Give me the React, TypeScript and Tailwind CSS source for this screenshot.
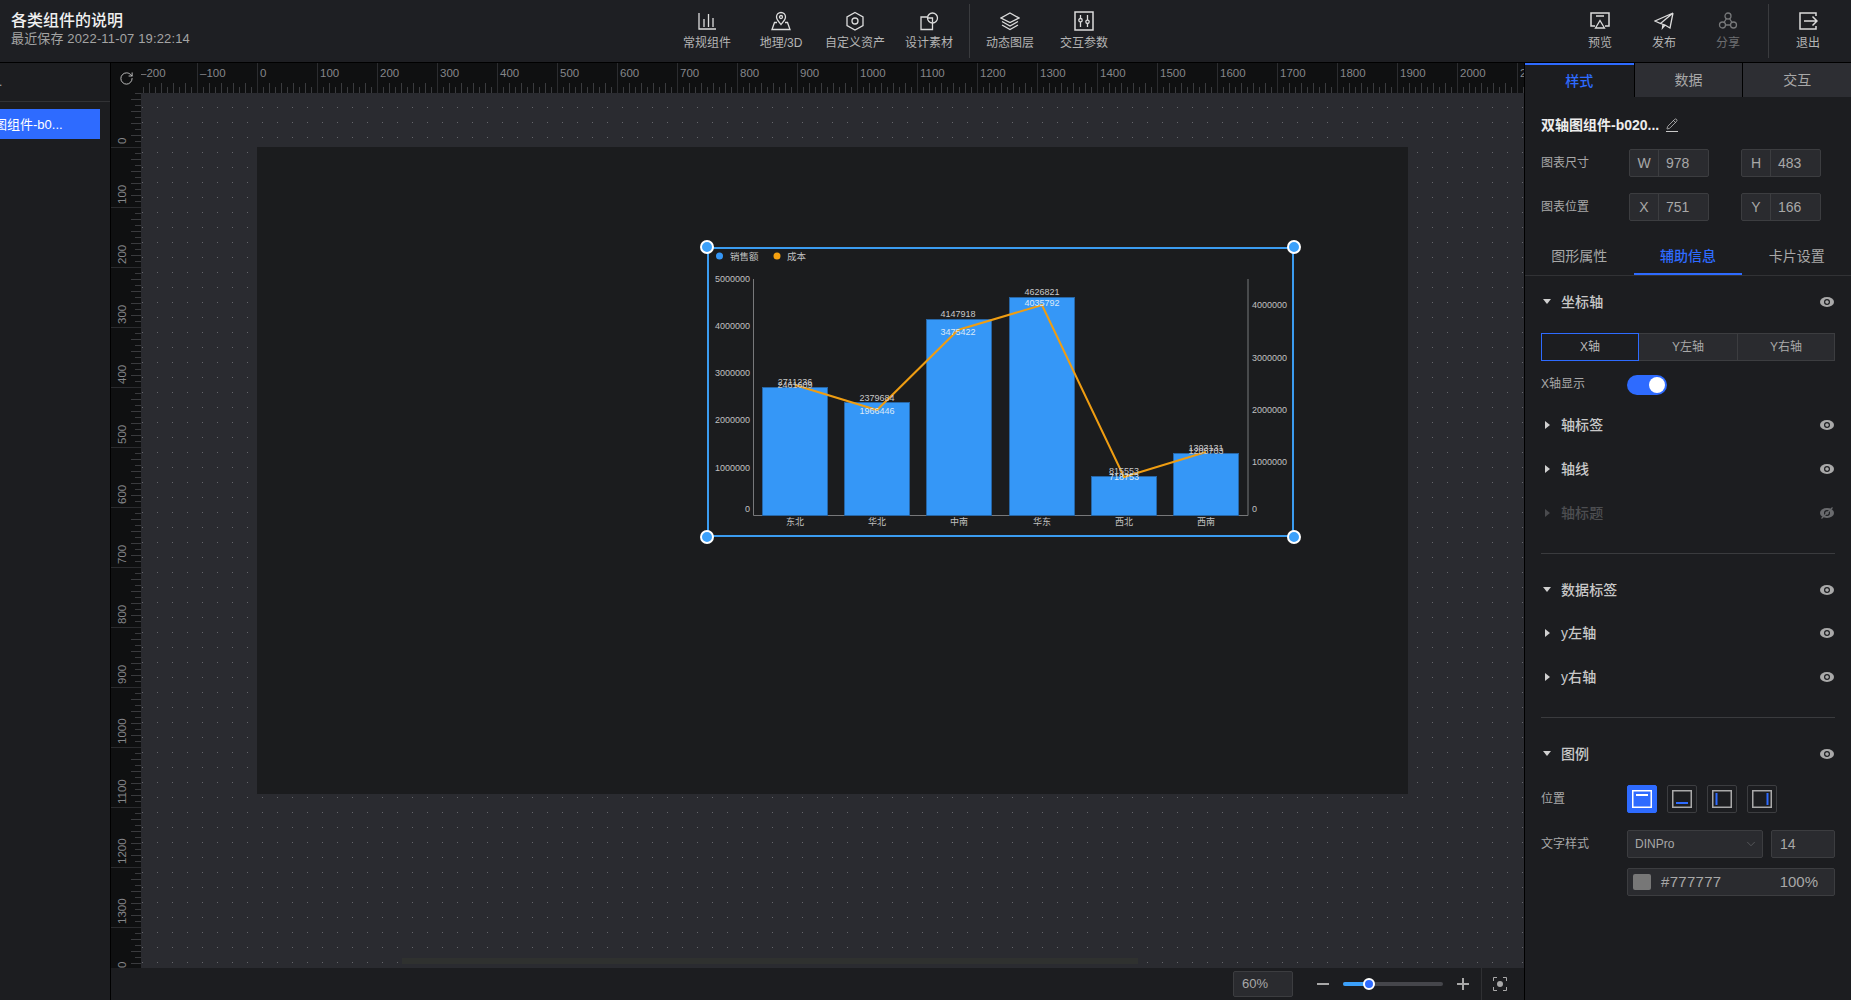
import { RotateCw, ChevronDown, Pencil } from "lucide-react"

const bars = [
  { x: 762, top: 387, name: "东北" },
  { x: 844, top: 402, name: "华北" },
  { x: 926, top: 319, name: "中南" },
  { x: 1009, top: 297, name: "华东" },
  { x: 1091, top: 476, name: "西北" },
  { x: 1173, top: 453, name: "西南" },
]

const linePoints = "795,385 877,410 958,330 1042,305 1124,477 1206,452"

// value labels, [text, x, y, colour]
const valueLabels: [string, number, number, string][] = [
  ["2711236", 795, 385, "#c8c8c8"],
  ["2461609", 795, 388, "#c8c8c8"],
  ["2379684", 877, 401, "#c8c8c8"],
  ["1966446", 877, 414, "#dbe9f8"],
  ["4147918", 958, 317, "#c8c8c8"],
  ["3475422", 958, 335, "#dbe9f8"],
  ["4626821", 1042, 295, "#c8c8c8"],
  ["4035792", 1042, 306, "#dbe9f8"],
  ["815553", 1124, 474, "#c8c8c8"],
  ["718753", 1124, 480, "#dbe9f8"],
  ["1303131", 1206, 451, "#c8c8c8"],
  ["1205703", 1206, 454, "#c8c8c8"],
]

const leftTicks: [string, number][] = [
  ["5000000", 282],
  ["4000000", 329],
  ["3000000", 376],
  ["2000000", 423],
  ["1000000", 471],
  ["0", 512],
]

const rightTicks: [string, number][] = [
  ["4000000", 308],
  ["3000000", 361],
  ["2000000", 413],
  ["1000000", 465],
  ["0", 512],
]

function Chart() {
  return (
    <svg className="absolute inset-0" width={587} height={290} viewBox="707 247 587 290">
      <circle cx={719.5} cy={256} r={3.5} fill="#3597f7" />
      <text x={730} y={260} fontSize={9.5} fill="#c0c0c0">销售额</text>
      <circle cx={777} cy={256} r={3.5} fill="#f5a00f" />
      <text x={787} y={260} fontSize={9.5} fill="#c0c0c0">成本</text>

      <path d="M753.5 279V515.5H1248V279" fill="none" stroke="#77787a" strokeWidth={1} />

      {bars.map((b) => (
        <rect key={b.name} x={b.x + 0.5} y={b.top + 0.5} width={65} height={515 - b.top} fill="#3597f7" stroke="#2766a6" strokeWidth={1} />
      ))}
      <polyline points={linePoints} fill="none" stroke="#ef9d12" strokeWidth={2} />

      {valueLabels.map(([t, x, y, c]) => (
        <text key={t} x={x} y={y} fontSize={9} fill={c} textAnchor="middle">{t}</text>
      ))}
      {leftTicks.map(([t, y]) => (
        <text key={t} x={750} y={y} fontSize={9} fill="#c0c0c0" textAnchor="end">{t}</text>
      ))}
      {rightTicks.map(([t, y]) => (
        <text key={t} x={1252} y={y} fontSize={9} fill="#c0c0c0">{t}</text>
      ))}
      {bars.map((b) => (
        <text key={b.name} x={b.x + 33} y={525} fontSize={9} fill="#c0c0c0" textAnchor="middle">{b.name}</text>
      ))}
    </svg>
  )
}

function TopRuler() {
  const majors = Array.from({ length: 24 }, (_, i) => i)
  return (
    <svg width={1413} height={30} className="block shrink-0 bg-[#0f1011]">
      {majors.map((i) => {
        const x = 26 + i * 60
        return (
          <g key={i}>
            <line x1={x + 0.5} y1={0} x2={x + 0.5} y2={30} stroke="#2b2c2f" />
            {[1, 2, 3, 4, 5, 6, 7, 8, 9].map((k) => (
              <line key={k} x1={x + k * 6 + 0.5} y1={k % 2 === 0 ? 20 : 24} x2={x + k * 6 + 0.5} y2={30} stroke="#3a3b3e" />
            ))}
            <text x={x + 3} y={14} fontSize={11.5} fill="#85868a">{i === 0 ? "–200" : i === 1 ? "–100" : (i - 2) * 100}</text>
          </g>
        )
      })}
      <rect width={30} height={30} fill="#0f1011" />
    </svg>
  )
}

function LeftRuler() {
  const majors = Array.from({ length: 15 }, (_, i) => i)
  return (
    <svg width={30} height={875} className="block shrink-0 bg-[#0f1011]">
      {majors.map((i) => {
        const y = 54 + i * 60 - 60
        return (
          <g key={i}>
            <line x1={0} y1={y + 0.5} x2={30} y2={y + 0.5} stroke="#2b2c2f" />
            {[1, 2, 3, 4, 5, 6, 7, 8, 9].map((k) => (
              <line key={k} x1={k % 2 === 0 ? 20 : 24} y1={y + k * 6 + 0.5} x2={30} y2={y + k * 6 + 0.5} stroke="#3a3b3e" />
            ))}
            {i > 0 && i < 15 && (
              <text x={15} y={y - 3} fontSize={11.5} fill="#85868a" transform={`rotate(-90 15 ${y - 3})`}>{(i - 1) * 100}</text>
            )}
          </g>
        )
      })}
      <text x={15} y={875} fontSize={11.5} fill="#85868a" transform="rotate(-90 15 875)">0</text>
    </svg>
  )
}

function Handle({ className }: { className: string }) {
  return <div className={`absolute h-[14px] w-[14px] rounded-full border-2 border-white bg-[#3ba0fa] ${className}`} />
}

function NavItem({ label, children, dim }: { label: string; children: React.ReactNode; dim?: boolean }) {
  return (
    <div className={`flex h-full flex-col items-center pt-[11px] ${dim ? "text-[#6e6f72]" : "text-[#b4b4b4]"}`}>
      <svg width={20} height={20} viewBox="0 0 20 20" fill="none" stroke={dim ? "#77787a" : "#dcdcdc"} strokeWidth={1.3}>
        {children}
      </svg>
      <span className="mt-[4px] whitespace-nowrap text-[12px] leading-[16px]">{label}</span>
    </div>
  )
}

function Eye({ off }: { off?: boolean }) {
  return (
    <svg width={14} height={12} viewBox="0 0 14 12" className="shrink-0">
      <ellipse cx={7} cy={6} rx={7} ry={5} fill={off ? "#6a6b6e" : "#a9a9a9"} />
      <circle cx={7} cy={6} r={2.4} fill="none" stroke="#1c1d20" strokeWidth={1.2} />
      {off && <path d="M1.5 11.5 12.5 .5" stroke="#6a6b6e" strokeWidth={1.2} />}
    </svg>
  )
}

function Section({ label, open, off, className }: { label: string; open?: boolean; off?: boolean; className: string }) {
  return (
    <div className={`flex h-[20px] items-center ${className}`}>
      <svg width={10} height={10} viewBox="0 0 10 10" className="ml-px shrink-0">
        {open ? (
          <path d="M1 2h8L5 7z" fill="#d0d0d0" />
        ) : (
          <path d="M3 1v8l5-4z" fill={off ? "#4a4b4e" : "#d0d0d0"} />
        )}
      </svg>
      <span className={`ml-[9px] text-[14px] font-medium tracking-[0.1px] ${off ? "text-[#4d4e51]" : "text-[#c8c8c8]"}`}>{label}</span>
      <div className="ml-auto flex pr-px">
        <Eye off={off} />
      </div>
    </div>
  )
}

function Field({ prefix, value }: { prefix: string; value: string }) {
  return (
    <div className="flex h-[28px] w-[80px] rounded-[2px] border border-[#3c3d40] bg-[#2a2b2f] text-[14px] text-[#a8a8a8]">
      <div className="flex w-[29px] items-center justify-center border-r border-[#3c3d40]">{prefix}</div>
      <div className="flex flex-1 items-center pl-[7px]">{value}</div>
    </div>
  )
}

function LegendPos({ active, line }: { active?: boolean; line: "top" | "bottom" | "left" | "right" }) {
  const c = active ? "#ffffff" : "#a9a9a9"
  const l = active ? "#ffffff" : "#2e6bff"
  const d = { top: "M4 5h12", bottom: "M4 13h12", left: "M4.5 3v12", right: "M15.5 3v12" }[line]
  return (
    <div className={`flex h-[28px] w-[30px] items-center justify-center rounded-[2px] border ${active ? "border-[#2e6bff] bg-[#2e6bff]" : "border-[#3c3d40]"}`}>
      <svg width={20} height={18} viewBox="0 0 20 18" fill="none">
        <rect x={0.75} y={0.75} width={18.5} height={16.5} stroke={c} strokeWidth={1.5} />
        <path d={d} stroke={l} strokeWidth={2} />
      </svg>
    </div>
  )
}

export default function App() {
  return (
    <div className="flex h-[1000px] w-[1851px] flex-col overflow-hidden bg-[#1c1d20] font-['Liberation_Sans','Noto_Sans_CJK_SC',sans-serif]">
      {/* top bar */}
      <header className="flex h-[63px] shrink-0 items-stretch border-b border-black bg-[#1e1f23]">
        <div className="w-[670px] shrink-0 pl-[11px] pt-[11px]">
          <div className="text-[16px] font-medium leading-[20px] text-[#f0f0f0]">各类组件的说明</div>
          <div className="text-[13px] leading-[16px] tracking-[0.15px] text-[#a4a4a4]">最近保存 2022-11-07 19:22:14</div>
        </div>
        <div className="grid w-[296px] grid-cols-4">
          <NavItem label="常规组件">
            <path d="M2 2v16h17M7 8v8M11.5 3v13M16 7v9" />
          </NavItem>
          <NavItem label="地理/3D">
            <path d="M10 13.5C7.5 10.5 5.5 8.5 5.5 6a4.5 4.5 0 0 1 9 0c0 2.500-2 4.500-4.500 7.500z" />
            <circle cx={10} cy={6} r={1.5} />
            <path d="M6 11.5H3.500L1 18.500h18L16.500 11.500H14" />
          </NavItem>
          <NavItem label="自定义资产">
            <path d="M10 1.500 18 6v8.500L10 19 2 14.500V6z" />
            <circle cx={10} cy={10} r={3} />
          </NavItem>
          <NavItem label="设计素材">
            <path d="M8 6H2v12.500h11.500V12" />
            <circle cx={13.500} cy={7} r={5} />
            <path d="M9 7h4.500v4.500" />
          </NavItem>
        </div>
        <div className="my-[4px] ml-[3px] w-px bg-[#3a3b3e]" />
        <div className="ml-[3px] grid w-[148px] grid-cols-2">
          <NavItem label="动态图层">
            <path d="M10 2 19 7l-9 4.500L1 7z" />
            <path d="m2 10.500 8 4.500 8-4.500M2 14l8 4.500 8-4.500" />
          </NavItem>
          <NavItem label="交互参数">
            <path d="M1 1h18v18H1z" strokeWidth={1.5} />
            <path d="M6.500 4v3.500M6.500 11v5M13.500 4v5M13.500 12.500V16" />
            <circle cx={6.500} cy={9.200} r={1.700} />
            <circle cx={13.500} cy={10.800} r={1.700} />
          </NavItem>
        </div>
        <div className="ml-auto grid w-[192px] grid-cols-3">
          <NavItem label="预览">
            <path d="M5 15H1V2h18v13h-4" strokeWidth={1.5} />
            <path d="M6 5h8M10 9.500 14.500 17h-9z" />
          </NavItem>
          <NavItem label="发布">
            <path d="M19 2 1 10l5.500 2.500L19 2zM19 2l-3 15-5-3-4.500-1.500M11 14l-2.500 3 .5-4" />
          </NavItem>
          <NavItem label="分享" dim>
            <circle cx={10} cy={5} r={3} />
            <circle cx={4.500} cy={14} r={3} />
            <circle cx={15.500} cy={14} r={3} />
            <path d="M7.500 14h5M8.500 7.500 6 11.500M11.500 7.500l2.500 4" />
          </NavItem>
        </div>
        <div className="my-[4px] ml-[8px] w-px bg-[#3a3b3e]" />
        <div className="ml-[7px] mr-[11px] w-[64px]">
          <NavItem label="退出">
            <path d="M18 5V2H2v16h16v-3" strokeWidth={1.5} />
            <path d="M6 10h13M14.500 5.500 19 10l-4.500 4.500" strokeWidth={1.5} />
          </NavItem>
        </div>
      </header>

      <div className="flex min-h-0 flex-1">
        {/* layer list */}
        <aside className="w-[111px] shrink-0 overflow-hidden border-r border-black bg-[#1c1d20]">
          <div className="flex h-[39px] items-center border-b border-[#313235] text-[12px] text-[#aaaaaa]">
            <span className="-ml-px leading-none">.</span>
          </div>
          <div className="mt-[7px] flex h-[30px] w-[100px] items-center overflow-hidden whitespace-nowrap bg-[#2e6bff] pt-px text-[13px] text-white">
            <span className="-ml-[6px]">图组件-b0...</span>
          </div>
        </aside>

        {/* editor canvas */}
        <main className="flex min-w-0 flex-1 flex-col">
          <div className="relative shrink-0">
            <TopRuler />
            <RotateCw className="absolute left-[8px] top-[8px] h-[15px] w-[15px] text-[#c4c4c4]" strokeWidth={1.5} />
          </div>
          <div className="flex h-[875px] shrink-0">
            <LeftRuler />
            <div className="relative flex-1 overflow-hidden bg-[#2a2b30] bg-[radial-gradient(#66676c_0.8px,transparent_1px)] bg-[size:15px_15px] bg-[position:9px_7px]">
              <div className="absolute left-[116px] top-[54px] h-[647px] w-[1151px] bg-[#1b1c1e]">
                <div className="absolute left-[450px] top-[100px] h-[290px] w-[587px] border-2 border-[#3b9cf0]">
                  <div className="absolute -left-[2px] -top-[2px] h-[290px] w-[587px]">
                    <Chart />
                  </div>
                  <Handle className="-left-[9px] -top-[9px]" />
                  <Handle className="-right-[9px] -top-[9px]" />
                  <Handle className="-bottom-[9px] -left-[9px]" />
                  <Handle className="-bottom-[9px] -right-[9px]" />
                </div>
              </div>
              <div className="absolute bottom-[4px] left-[261px] h-[6px] w-[736px] bg-[#2f312f]" />
            </div>
          </div>
          <div className="flex h-[32px] shrink-0 items-center justify-end bg-[#1c1d20] pr-[16px]">
            <div className="flex h-[26px] w-[60px] items-center rounded-[2px] border border-[#3c3d40] bg-[#2a2b2f] pl-[8px] text-[13px] text-[#a8a8a8]">60%</div>
            <div className="ml-[24px] h-[2px] w-[12px] bg-[#a8a8a8]" />
            <div className="ml-[14px] flex h-[4px] w-[100px] items-center rounded-full bg-[#45464b]">
              <div className="h-[4px] w-[26px] rounded-full bg-[#3ba0fa]" />
              <div className="-ml-[6px] h-[12px] w-[12px] rounded-full border-2 border-white bg-[#2e6bff]" />
            </div>
            <div className="relative ml-[14px] flex h-[12px] w-[12px] items-center justify-center">
              <div className="h-[2px] w-[12px] bg-[#a8a8a8]" />
              <div className="absolute h-[12px] w-[2px] bg-[#a8a8a8]" />
            </div>
            <div className="ml-[12px] h-[32px] w-px bg-[#2f3033]" />
            <svg width={14} height={14} viewBox="0 0 14 14" fill="none" className="ml-[11px] mr-px">
              <path d="M.5 4V.5H4M10 .5h3.500V4M13.500 10v3.500H10M4 13.500H.5V10" stroke="#a8a8a8" />
              <circle cx={7} cy={7} r={3} fill="#a8a8a8" />
            </svg>
          </div>
        </main>

        {/* property panel */}
        <aside className="w-[327px] shrink-0 border-l border-black bg-[#1c1d20] text-[#a8a8a8]">
          <div className="grid h-[34px] grid-cols-3 text-[14px]">
            <div className="flex items-center justify-center border-t-2 border-[#2e6bff] font-medium text-[#2e6bff]">样式</div>
            <div className="flex items-center justify-center border-l border-black bg-[#2d2e33]">数据</div>
            <div className="flex items-center justify-center border-l border-black bg-[#2d2e33]">交互</div>
          </div>

          <div className="px-[16px]">
            <div className="mt-[18px] flex h-[20px] items-center text-[14px] font-bold text-[#ececec]">
              双轴图组件-b020...
              <span className="ml-[7px] border-b border-[#c8c8c8] pb-px">
                <Pencil className="h-[12px] w-[12px] text-[#c8c8c8]" strokeWidth={1.5} />
              </span>
            </div>
            <div className="mt-[14px] flex items-center text-[12px]">
              <div className="w-[88px]">图表尺寸</div>
              <Field prefix="W" value="978" />
              <div className="ml-[32px]"><Field prefix="H" value="483" /></div>
            </div>
            <div className="mt-[16px] flex items-center text-[12px]">
              <div className="w-[88px]">图表位置</div>
              <Field prefix="X" value="751" />
              <div className="ml-[32px]"><Field prefix="Y" value="166" /></div>
            </div>
          </div>

          <div className="mt-[19px] grid h-[36px] grid-cols-3 border-b border-[#313235] text-[14px]">
            <div className="flex items-center justify-center pb-[2px]">图形属性</div>
            <div className="flex items-center justify-center border-b-2 border-[#2e6bff] font-medium text-[#2e6bff]">辅助信息</div>
            <div className="flex items-center justify-center pb-[2px]">卡片设置</div>
          </div>

          <div className="px-[16px]">
            <Section label="坐标轴" open className="mt-[16px]" />
            <div className="mt-[21px] grid h-[28px] grid-cols-3 text-[12px]">
              <div className="flex items-center justify-center border border-[#2e6bff] text-[#b8b8b8]">X轴</div>
              <div className="flex items-center justify-center border-y border-[#3c3d40] bg-[#2a2b2f]">Y左轴</div>
              <div className="flex items-center justify-center border border-[#3c3d40] bg-[#2a2b2f]">Y右轴</div>
            </div>
            <div className="mt-[14px] flex h-[20px] items-center text-[12px]">
              <div className="w-[86px] pb-[2px]">X轴显示</div>
              <div className="flex h-[20px] w-[40px] items-center justify-end rounded-full bg-[#2e6bff] pr-[2px]">
                <div className="h-[16px] w-[16px] rounded-full bg-white" />
              </div>
            </div>
            <Section label="轴标签" className="mt-[20px]" />
            <Section label="轴线" className="mt-[24px]" />
            <Section label="轴标题" off className="mt-[24px]" />
            <div className="mt-[30px] h-px bg-[#3a3b3e]" />
            <Section label="数据标签" open className="mt-[26px]" />
            <Section label="y左轴" className="mt-[23px]" />
            <Section label="y右轴" className="mt-[24px]" />
            <div className="mt-[30px] h-px bg-[#3a3b3e]" />
            <Section label="图例" open className="mt-[26px]" />

            <div className="mt-[21px] flex h-[28px] items-center text-[12px]">
              <div className="w-[86px]">位置</div>
              <div className="flex gap-[10px]">
                <LegendPos active line="top" />
                <LegendPos line="bottom" />
                <LegendPos line="left" />
                <LegendPos line="right" />
              </div>
            </div>
            <div className="mt-[17px] flex h-[28px] items-center text-[12px]">
              <div className="w-[86px]">文字样式</div>
              <div className="flex h-[28px] w-[136px] items-center justify-between rounded-[2px] border border-[#3c3d40] bg-[#2a2b2f] pl-[7px] pr-[4px] text-[12px]">
                DINPro
                <ChevronDown className="h-[14px] w-[14px] text-[#66676a]" strokeWidth={1.2} />
              </div>
              <div className="ml-[8px] flex h-[28px] w-[64px] items-center rounded-[2px] border border-[#3c3d40] bg-[#2a2b2f] pl-[8px] text-[14px]">14</div>
            </div>
            <div className="ml-[86px] mt-[10px] flex h-[28px] items-center rounded-[2px] border border-[#3c3d40] bg-[#2a2b2f] pl-[5px] pr-[16px] text-[15px]">
              <div className="h-[16px] w-[18px] rounded-[2px] bg-[#777777]" />
              <span className="ml-[10px] tracking-[0.3px]">#777777</span>
              <span className="ml-auto">100%</span>
            </div>
          </div>
        </aside>
      </div>
    </div>
  )
}
